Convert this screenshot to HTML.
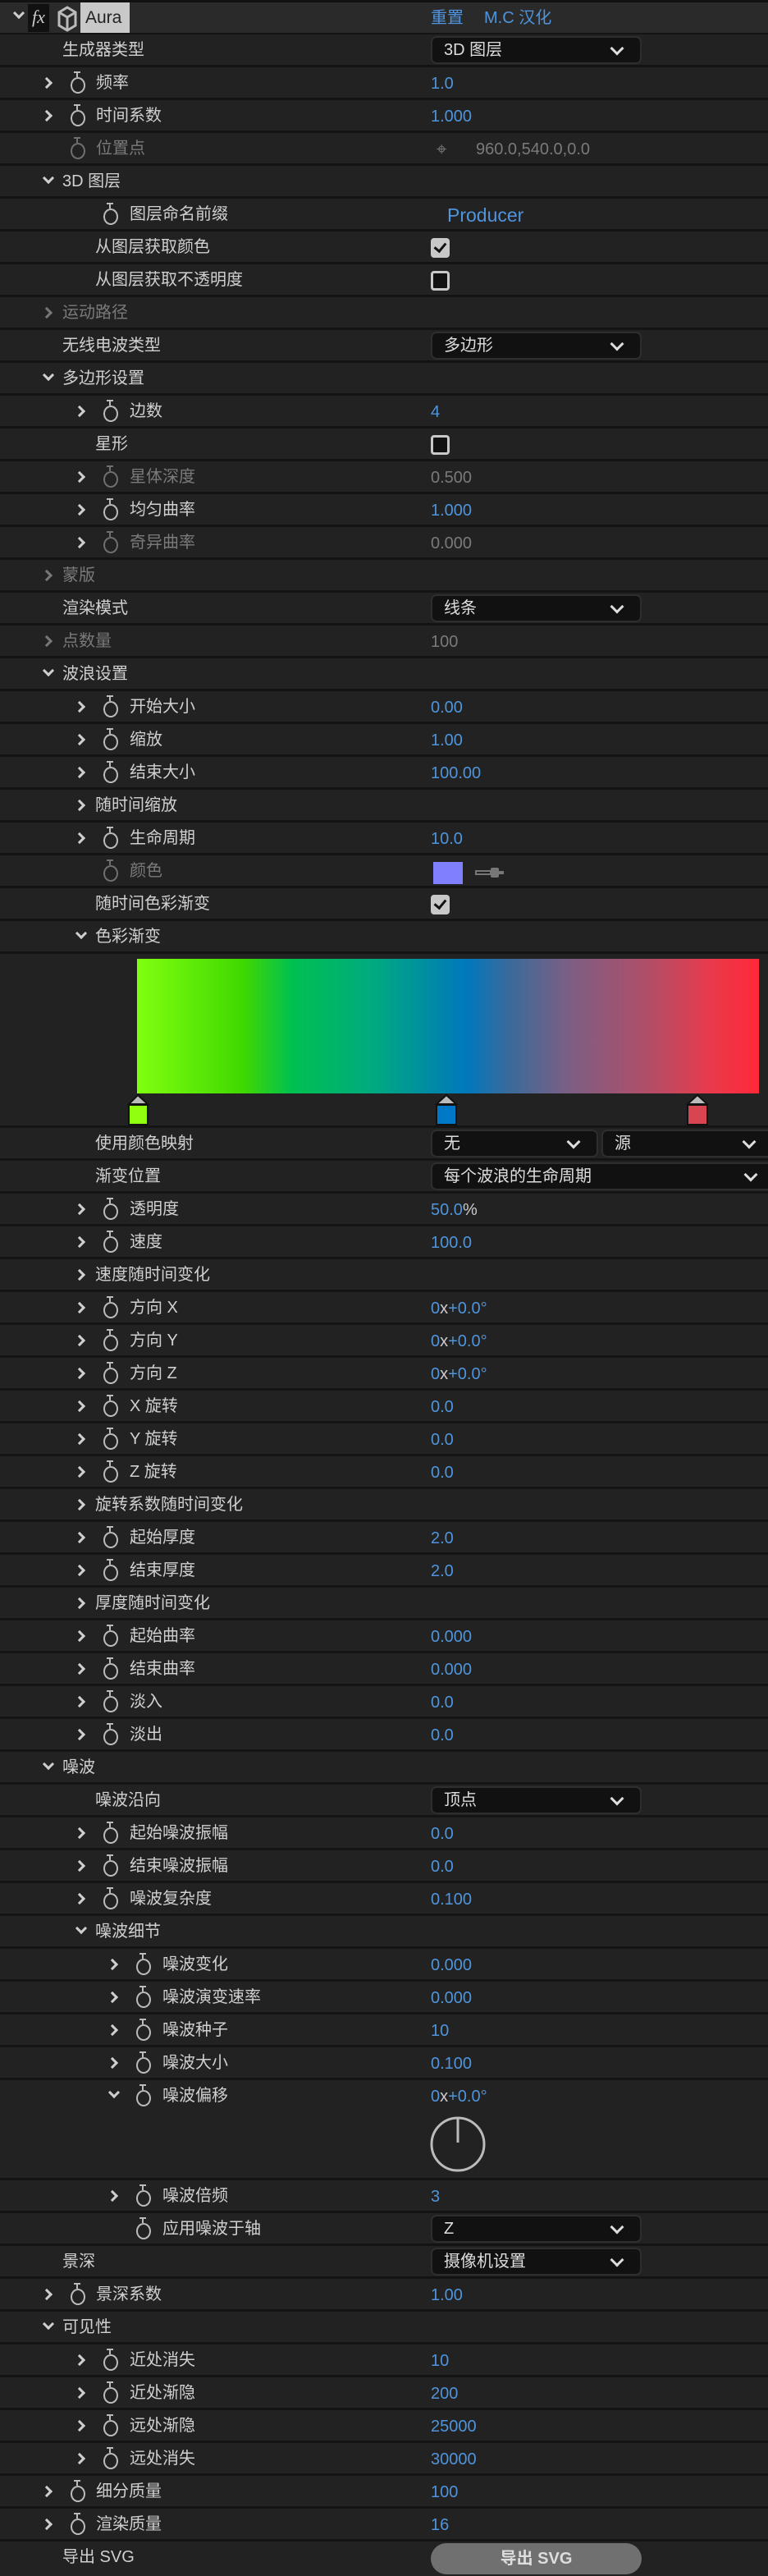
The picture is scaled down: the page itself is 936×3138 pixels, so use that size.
<!DOCTYPE html>
<html><head><meta charset="utf-8"><style>
*{margin:0;padding:0;box-sizing:border-box}
body{width:936px;height:3138px;background:#222222;font-family:"Liberation Sans","Noto Sans CJK SC",sans-serif;color:#d0d0d0;font-size:20px;overflow:hidden;position:relative}
.h{height:42px;background:#2a2a2a;border-top:3px solid #111;border-bottom:2px solid #141414;position:relative}
.r{height:40px;border-bottom:3px solid #141414;position:relative;background:#222}
.l{position:absolute;top:6px;line-height:26px;white-space:nowrap}
.v{position:absolute;left:525px;top:7px;line-height:26px;color:#4f94dc}
.dim .l,.dim .v{color:#7a7a7a}
.c{position:absolute;top:14px;width:10px;height:10px;border-right:3px solid #cfcfcf;border-bottom:3px solid #cfcfcf;transform:rotate(-45deg)}
.c.d{transform:rotate(45deg);top:10px}
.dim .c{border-color:#777}
.s{position:absolute;top:12px;width:18px;height:20px;border:2.5px solid #bbb;border-radius:50%}
.s::before{content:"";position:absolute;left:5px;top:-8px;width:2px;height:6px;background:#bbb}
.s::after{content:"";position:absolute;left:2px;top:-9px;width:8px;height:2px;background:#bbb}
.sd{opacity:.5}
.dd{position:absolute;left:525px;top:2px;width:257px;height:34px;background:#111;border:2px solid #2e2e2e;border-radius:7px;color:#ddd;line-height:30px;padding-left:14px}
.dd::after{content:"";position:absolute;right:22px;top:7px;width:9px;height:9px;border-right:3px solid #ddd;border-bottom:3px solid #ddd;transform:rotate(45deg)}
.cb{position:absolute;left:525px;top:8px;width:23px;height:24px;border-radius:4px;background:#c8c8c8}
.cb.on::after{content:"";position:absolute;left:7px;top:3px;width:6px;height:11px;border-right:3px solid #111;border-bottom:3px solid #111;transform:rotate(40deg)}
.cb.off{background:#111;border:3px solid #c8c8c8}
</style></head><body>
<div class="h">
<i class="c d" style="left:18px;top:8px"></i>
<div style="position:absolute;left:34px;top:2px;width:26px;height:34px;background:#111;color:#ccc;font-style:italic;font-family:'Liberation Serif',serif;font-size:22px;line-height:32px;text-align:center">fx</div>
<svg style="position:absolute;left:69px;top:3px" width="26" height="34" viewBox="0 0 26 34"><path d="M13 3 L23 9 L23 25 L13 31 L3 25 L3 9 Z M3 9 L13 15 L23 9 M13 15 L13 31" fill="none" stroke="#bbb" stroke-width="3"/></svg>
<div style="position:absolute;left:98px;top:0;width:60px;height:37px;background:#c8c8c8;color:#222;line-height:37px;padding-left:6px;font-size:21px">Aura</div>
<span style="position:absolute;left:525px;top:5px;color:#4f94dc;line-height:28px">重置</span>
<span style="position:absolute;left:590px;top:5px;color:#4f94dc;line-height:28px">M.C 汉化</span>
</div>
<div class="r"><span class="l" style="left:76px">生成器类型</span><div class="dd">3D 图层</div></div>
<div class="r"><i class="c" style="left:52px"></i><i class="s" style="left:86px"></i><span class="l" style="left:117px">频率</span><span class="v">1.0</span></div>
<div class="r"><i class="c" style="left:52px"></i><i class="s" style="left:86px"></i><span class="l" style="left:117px">时间系数</span><span class="v">1.000</span></div>
<div class="r dim"><i class="s sd" style="left:86px"></i><span class="l" style="left:117px">位置点</span><span style="position:absolute;left:532px;top:7px;color:#777;font-size:22px;line-height:26px">⌖</span><span class="v" style="left:580px">960.0,540.0,0.0</span></div>
<div class="r"><i class="c d" style="left:54px"></i><span class="l" style="left:76px">3D 图层</span></div>
<div class="r"><i class="s" style="left:126px"></i><span class="l" style="left:158px">图层命名前缀</span><span class="v" style="left:545px;font-size:23px">Producer</span></div>
<div class="r"><span class="l" style="left:116px">从图层获取颜色</span><i class="cb on"></i></div>
<div class="r"><span class="l" style="left:116px">从图层获取不透明度</span><i class="cb off"></i></div>
<div class="r dim"><i class="c" style="left:52px"></i><span class="l" style="left:76px">运动路径</span></div>
<div class="r"><span class="l" style="left:76px">无线电波类型</span><div class="dd">多边形</div></div>
<div class="r"><i class="c d" style="left:54px"></i><span class="l" style="left:76px">多边形设置</span></div>
<div class="r"><i class="c" style="left:92px"></i><i class="s" style="left:126px"></i><span class="l" style="left:158px">边数</span><span class="v">4</span></div>
<div class="r"><span class="l" style="left:116px">星形</span><i class="cb off"></i></div>
<div class="r dim"><i class="c" style="left:92px;border-color:#cfcfcf"></i><i class="s sd" style="left:126px"></i><span class="l" style="left:158px">星体深度</span><span class="v">0.500</span></div>
<div class="r"><i class="c" style="left:92px"></i><i class="s" style="left:126px"></i><span class="l" style="left:158px">均匀曲率</span><span class="v">1.000</span></div>
<div class="r dim"><i class="c" style="left:92px;border-color:#cfcfcf"></i><i class="s sd" style="left:126px"></i><span class="l" style="left:158px">奇异曲率</span><span class="v">0.000</span></div>
<div class="r dim"><i class="c" style="left:52px"></i><span class="l" style="left:76px">蒙版</span></div>
<div class="r"><span class="l" style="left:76px">渲染模式</span><div class="dd">线条</div></div>
<div class="r dim"><i class="c" style="left:52px"></i><span class="l" style="left:76px">点数量</span><span class="v">100</span></div>
<div class="r"><i class="c d" style="left:54px"></i><span class="l" style="left:76px">波浪设置</span></div>
<div class="r"><i class="c" style="left:92px"></i><i class="s" style="left:126px"></i><span class="l" style="left:158px">开始大小</span><span class="v">0.00</span></div>
<div class="r"><i class="c" style="left:92px"></i><i class="s" style="left:126px"></i><span class="l" style="left:158px">缩放</span><span class="v">1.00</span></div>
<div class="r"><i class="c" style="left:92px"></i><i class="s" style="left:126px"></i><span class="l" style="left:158px">结束大小</span><span class="v">100.00</span></div>
<div class="r"><i class="c" style="left:92px"></i><span class="l" style="left:116px">随时间缩放</span></div>
<div class="r"><i class="c" style="left:92px"></i><i class="s" style="left:126px"></i><span class="l" style="left:158px">生命周期</span><span class="v">10.0</span></div>
<div class="r dim"><i class="s sd" style="left:126px"></i><span class="l" style="left:158px">颜色</span><i style="position:absolute;left:528px;top:8px;width:36px;height:27px;background:#8080ff"></i><svg style="position:absolute;left:578px;top:14px" width="38" height="14" viewBox="0 0 38 14"><path d="M2 5 H20 V9 H2 Z" fill="none" stroke="#777" stroke-width="2"/><rect x="20" y="1" width="10" height="12" rx="2" fill="#777"/><rect x="30" y="5" width="6" height="4" fill="#777"/></svg></div>
<div class="r"><span class="l" style="left:116px">随时间色彩渐变</span><i class="cb on"></i></div>
<div class="r"><i class="c d" style="left:94px"></i><span class="l" style="left:116px">色彩渐变</span></div>
<div class="r" style="height:212px">
<div style="position:absolute;left:167px;top:6px;width:758px;height:164px;background:linear-gradient(90deg,#80ff10 0%,#40d800 17%,#00c050 25%,#00aa80 38%,#0078bc 53%,#3b6a9a 60%,#7a5f85 69%,#b04e68 82%,#e83a4c 92%,#ff2838 100%)"></div>
<svg style="position:absolute;left:0;top:170px" width="936" height="40">
<g stroke="#111" stroke-width="2"><path d="M168 2 L157 13 H180 Z" fill="#bbb"/><rect x="157" y="14" width="23" height="24" fill="#90ff10"/>
<path d="M544 2 L532 13 H556 Z" fill="#bbb"/><rect x="532" y="14" width="24" height="24" fill="#0078c8"/>
<path d="M850 2 L838 13 H862 Z" fill="#bbb"/><rect x="838" y="14" width="24" height="24" fill="#d84450"/></g></svg>
</div>
<div class="r"><span class="l" style="left:116px">使用颜色映射</span><div class="dd" style="width:204px">无</div><div class="dd" style="left:733px;width:210px">源</div></div>
<div class="r"><span class="l" style="left:116px">渐变位置</span><div class="dd" style="width:420px">每个波浪的生命周期</div></div>
<div class="r"><i class="c" style="left:92px"></i><i class="s" style="left:126px"></i><span class="l" style="left:158px">透明度</span><span class="v">50.0<span style="color:#ccc">%</span></span></div>
<div class="r"><i class="c" style="left:92px"></i><i class="s" style="left:126px"></i><span class="l" style="left:158px">速度</span><span class="v">100.0</span></div>
<div class="r"><i class="c" style="left:92px"></i><span class="l" style="left:116px">速度随时间变化</span></div>
<div class="r"><i class="c" style="left:92px"></i><i class="s" style="left:126px"></i><span class="l" style="left:158px">方向 X</span><span class="v">0<span style="color:#ccc">x</span>+0.0°</span></div>
<div class="r"><i class="c" style="left:92px"></i><i class="s" style="left:126px"></i><span class="l" style="left:158px">方向 Y</span><span class="v">0<span style="color:#ccc">x</span>+0.0°</span></div>
<div class="r"><i class="c" style="left:92px"></i><i class="s" style="left:126px"></i><span class="l" style="left:158px">方向 Z</span><span class="v">0<span style="color:#ccc">x</span>+0.0°</span></div>
<div class="r"><i class="c" style="left:92px"></i><i class="s" style="left:126px"></i><span class="l" style="left:158px">X 旋转</span><span class="v">0.0</span></div>
<div class="r"><i class="c" style="left:92px"></i><i class="s" style="left:126px"></i><span class="l" style="left:158px">Y 旋转</span><span class="v">0.0</span></div>
<div class="r"><i class="c" style="left:92px"></i><i class="s" style="left:126px"></i><span class="l" style="left:158px">Z 旋转</span><span class="v">0.0</span></div>
<div class="r"><i class="c" style="left:92px"></i><span class="l" style="left:116px">旋转系数随时间变化</span></div>
<div class="r"><i class="c" style="left:92px"></i><i class="s" style="left:126px"></i><span class="l" style="left:158px">起始厚度</span><span class="v">2.0</span></div>
<div class="r"><i class="c" style="left:92px"></i><i class="s" style="left:126px"></i><span class="l" style="left:158px">结束厚度</span><span class="v">2.0</span></div>
<div class="r"><i class="c" style="left:92px"></i><span class="l" style="left:116px">厚度随时间变化</span></div>
<div class="r"><i class="c" style="left:92px"></i><i class="s" style="left:126px"></i><span class="l" style="left:158px">起始曲率</span><span class="v">0.000</span></div>
<div class="r"><i class="c" style="left:92px"></i><i class="s" style="left:126px"></i><span class="l" style="left:158px">结束曲率</span><span class="v">0.000</span></div>
<div class="r"><i class="c" style="left:92px"></i><i class="s" style="left:126px"></i><span class="l" style="left:158px">淡入</span><span class="v">0.0</span></div>
<div class="r"><i class="c" style="left:92px"></i><i class="s" style="left:126px"></i><span class="l" style="left:158px">淡出</span><span class="v">0.0</span></div>
<div class="r"><i class="c d" style="left:54px"></i><span class="l" style="left:76px">噪波</span></div>
<div class="r"><span class="l" style="left:116px">噪波沿向</span><div class="dd">顶点</div></div>
<div class="r"><i class="c" style="left:92px"></i><i class="s" style="left:126px"></i><span class="l" style="left:158px">起始噪波振幅</span><span class="v">0.0</span></div>
<div class="r"><i class="c" style="left:92px"></i><i class="s" style="left:126px"></i><span class="l" style="left:158px">结束噪波振幅</span><span class="v">0.0</span></div>
<div class="r"><i class="c" style="left:92px"></i><i class="s" style="left:126px"></i><span class="l" style="left:158px">噪波复杂度</span><span class="v">0.100</span></div>
<div class="r"><i class="c d" style="left:94px"></i><span class="l" style="left:116px">噪波细节</span></div>
<div class="r"><i class="c" style="left:132px"></i><i class="s" style="left:166px"></i><span class="l" style="left:198px">噪波变化</span><span class="v">0.000</span></div>
<div class="r"><i class="c" style="left:132px"></i><i class="s" style="left:166px"></i><span class="l" style="left:198px">噪波演变速率</span><span class="v">0.000</span></div>
<div class="r"><i class="c" style="left:132px"></i><i class="s" style="left:166px"></i><span class="l" style="left:198px">噪波种子</span><span class="v">10</span></div>
<div class="r"><i class="c" style="left:132px"></i><i class="s" style="left:166px"></i><span class="l" style="left:198px">噪波大小</span><span class="v">0.100</span></div>
<div class="r" style="height:122px"><i class="c d" style="left:134px"></i><i class="s" style="left:166px"></i><span class="l" style="left:198px">噪波偏移</span><span class="v">0<span style="color:#ccc">x</span>+0.0°</span>
<svg style="position:absolute;left:520px;top:38px" width="80" height="80" viewBox="0 0 80 80"><circle cx="38" cy="40" r="32" fill="none" stroke="#bbb" stroke-width="3"/><line x1="38" y1="8" x2="38" y2="38" stroke="#bbb" stroke-width="3"/></svg></div>
<div class="r"><i class="c" style="left:132px"></i><i class="s" style="left:166px"></i><span class="l" style="left:198px">噪波倍频</span><span class="v">3</span></div>
<div class="r"><i class="s" style="left:166px"></i><span class="l" style="left:198px">应用噪波于轴</span><div class="dd">Z</div></div>
<div class="r"><span class="l" style="left:76px">景深</span><div class="dd">摄像机设置</div></div>
<div class="r"><i class="c" style="left:52px"></i><i class="s" style="left:86px"></i><span class="l" style="left:117px">景深系数</span><span class="v">1.00</span></div>
<div class="r"><i class="c d" style="left:54px"></i><span class="l" style="left:76px">可见性</span></div>
<div class="r"><i class="c" style="left:92px"></i><i class="s" style="left:126px"></i><span class="l" style="left:158px">近处消失</span><span class="v">10</span></div>
<div class="r"><i class="c" style="left:92px"></i><i class="s" style="left:126px"></i><span class="l" style="left:158px">近处渐隐</span><span class="v">200</span></div>
<div class="r"><i class="c" style="left:92px"></i><i class="s" style="left:126px"></i><span class="l" style="left:158px">远处渐隐</span><span class="v">25000</span></div>
<div class="r"><i class="c" style="left:92px"></i><i class="s" style="left:126px"></i><span class="l" style="left:158px">远处消失</span><span class="v">30000</span></div>
<div class="r"><i class="c" style="left:52px"></i><i class="s" style="left:86px"></i><span class="l" style="left:117px">细分质量</span><span class="v">100</span></div>
<div class="r"><i class="c" style="left:52px"></i><i class="s" style="left:86px"></i><span class="l" style="left:117px">渲染质量</span><span class="v">16</span></div>
<div class="r" style="border-bottom:none"><span class="l" style="left:76px">导出 SVG</span><div style="position:absolute;left:525px;top:2px;width:257px;height:38px;border-radius:19px;background:#707070;color:#ddd;font-weight:bold;text-align:center;line-height:38px">导出 SVG</div></div>
</body></html>
